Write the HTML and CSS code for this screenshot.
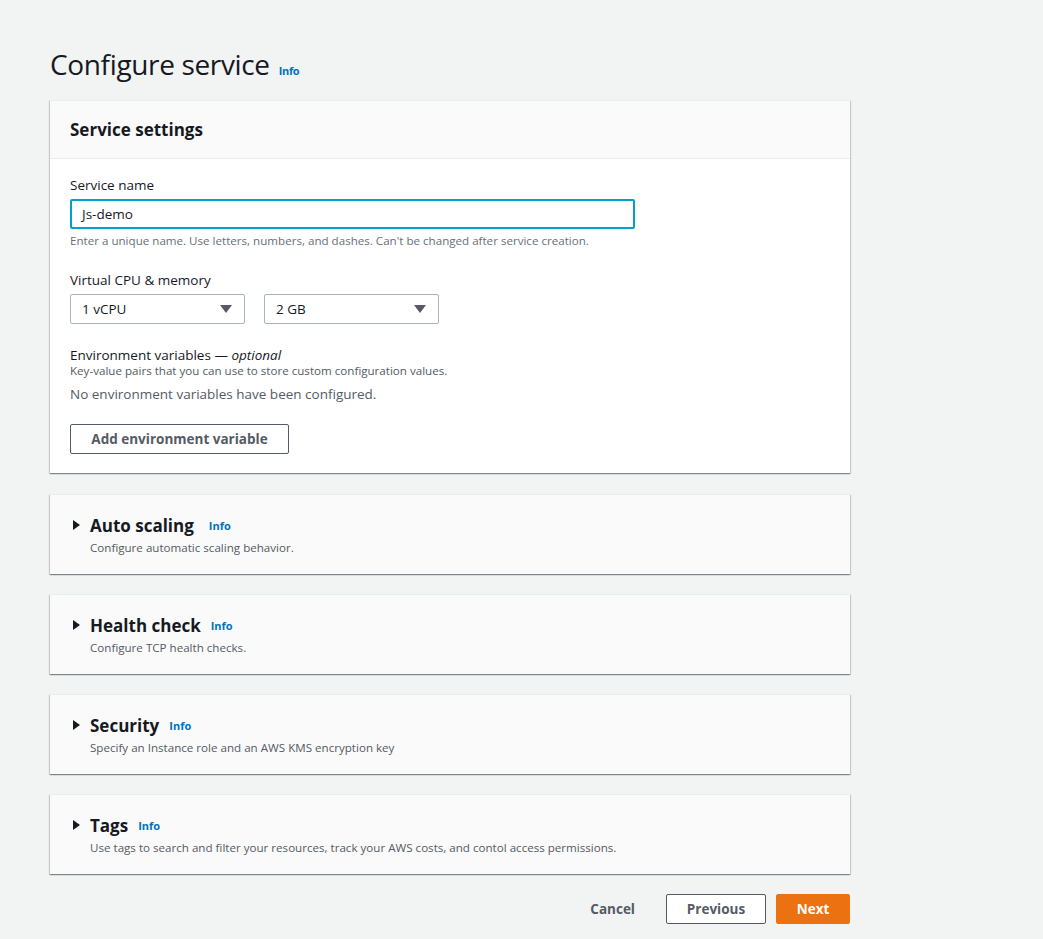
FILE: index.html
```html
<!DOCTYPE html>
<html lang="en">
<head>
<meta charset="utf-8">
<title>Configure service</title>
<link rel="stylesheet" href="styles.css">
</head>
<body>
<main class="page">
  <h1 class="page-title">Configure service <a class="info" href="#">Info</a></h1>

  <section class="card card-main">
    <header class="card-header"><h2>Service settings</h2></header>
    <div class="card-body">
      <div class="field">
        <label class="label">Service name</label>
        <div class="input">Js-demo</div>
        <p class="hint">Enter a unique name. Use letters, numbers, and dashes. Can't be changed after service creation.</p>
      </div>
      <div class="field">
        <label class="label">Virtual CPU &amp; memory</label>
        <div class="selects">
          <div class="select"><span>1 vCPU</span><span class="caret"></span></div>
          <div class="select"><span>2 GB</span><span class="caret"></span></div>
        </div>
      </div>
      <div class="field env">
        <label class="label">Environment variables — <i>optional</i></label>
        <p class="desc">Key-value pairs that you can use to store custom configuration values.</p>
        <p class="empty">No environment variables have been configured.</p>
        <button class="btn btn-normal">Add environment variable</button>
      </div>
    </div>
  </section>

  <section class="card collapsed">
    <div class="exp-head"><span class="tri"></span><h2>Auto scaling</h2><a class="info info-wide" href="#">Info</a></div>
    <p class="exp-desc">Configure automatic scaling behavior.</p>
  </section>

  <section class="card collapsed">
    <div class="exp-head"><span class="tri"></span><h2>Health check</h2><a class="info" href="#">Info</a></div>
    <p class="exp-desc">Configure TCP health checks.</p>
  </section>

  <section class="card collapsed">
    <div class="exp-head"><span class="tri"></span><h2>Security</h2><a class="info" href="#">Info</a></div>
    <p class="exp-desc">Specify an Instance role and an AWS KMS encryption key</p>
  </section>

  <section class="card collapsed">
    <div class="exp-head"><span class="tri"></span><h2>Tags</h2><a class="info" href="#">Info</a></div>
    <p class="exp-desc">Use tags to search and filter your resources, track your AWS costs, and contol access permissions.</p>
  </section>

  <div class="actions">
    <button class="btn btn-link">Cancel</button>
    <button class="btn btn-normal btn-prev">Previous</button>
    <button class="btn btn-primary">Next</button>
  </div>
</main>
</body>
</html>
```
FILE: styles.css
```css
* { box-sizing: border-box; }
html, body { margin: 0; padding: 0; }
body {
  background: #f2f3f3;
  font-family: "Open Sans", "Noto Sans", Arial, sans-serif;
  color: #16191f;
  font-size: 14px;
}
.page {
  width: 800px;
  margin-left: 50px;
  padding-top: 44px;
}
.page-title {
  margin: 0 0 9px;
  font-size: 28px;
  font-weight: 400;
  line-height: 40px;
  letter-spacing: -0.35px;
  display: flex;
  align-items: baseline;
  gap: 9px;
}
.info {
  color: #0073bb;
  font-size: 11px;
  font-weight: 700;
  text-decoration: none;
}
.card {
  background: #fff;
  box-shadow: 0 1px 1px 0 rgba(0,28,36,0.3), 1px 1px 1px 0 rgba(0,28,36,0.15), -1px 1px 1px 0 rgba(0,28,36,0.15);
  border-top: 1px solid #eaeded;
  margin-bottom: 20px;
}
.card-main { margin-bottom: 21px; }
.card-header {
  background: #fafafa;
  border-bottom: 1px solid #eaeded;
  height: 58px;
  padding: 0 20px;
  display: flex;
  align-items: center;
}
.card-header h2 {
  margin: 0;
  font-size: 17px;
  font-weight: 700;
}
.card-body {
  padding: 16px 20px 19px;
}
.field { margin-bottom: 21px; }
.label {
  display: block;
  font-size: 13.5px;
  line-height: 20px;
  margin-bottom: 4px;
}
.input {
  width: 565px;
  height: 30px;
  border: 2px solid #00a1c9;
  border-radius: 2px;
  padding: 0 10px;
  font-size: 13.5px;
  line-height: 26px;
}
.hint {
  margin: 4px 0 0;
  font-size: 11.6px;
  line-height: 16px;
  color: #687078;
}
.selects { display: flex; gap: 19px; }
.select {
  width: 175px;
  height: 30px;
  border: 1px solid #aab7b8;
  border-radius: 2px;
  padding: 0 12px 0 11px;
  display: flex;
  align-items: center;
  justify-content: space-between;
  font-size: 13.5px;
}
.caret {
  width: 0; height: 0;
  border-left: 6px solid transparent;
  border-right: 6px solid transparent;
  border-top: 8px solid #545b64;
}
.env { margin-bottom: 0; margin-top: 19px; }
.env .label { margin-bottom: 0; }
.env i { font-style: italic; }
.desc {
  margin: -2px 0 0;
  font-size: 11.6px;
  line-height: 16px;
  color: #545b64;
}
.empty {
  margin: 5px 0 0;
  font-size: 13.5px;
  line-height: 20px;
  color: #545b64;
}
.btn {
  font-family: inherit;
  font-weight: 700;
  font-size: 13.5px;
  cursor: pointer;
  border-radius: 2px;
  height: 30px;
  padding: 0 20px;
}
.btn-normal {
  background: #fff;
  border: 1px solid #545b64;
  color: #545b64;
}
.env .btn { margin-top: 20px; width: 219px; }
.collapsed {
  background: #fafafa;
  height: 80px;
  padding: 19px 20px 0 23px;
}
.exp-head {
  display: flex;
  align-items: center;
  height: 22px;
}
.tri {
  width: 0; height: 0;
  border-top: 5px solid transparent;
  border-bottom: 5px solid transparent;
  border-left: 7px solid #16191f;
  margin-right: 10px;
}
.exp-head h2 {
  margin: 0;
  font-size: 17px;
  font-weight: 700;
  margin-right: 10px;
}
.info-wide { margin-left: 5px; }
.exp-desc {
  margin: 4px 0 0 17px;
  font-size: 11.6px;
  line-height: 16px;
  color: #545b64;
}
.actions {
  display: flex;
  justify-content: flex-end;
  align-items: center;
  gap: 10px;
  margin-top: 0;
}
.btn-link {
  background: none;
  border: none;
  color: #545b64;
  padding: 0 20px;
  margin-right: 1px;
}
.btn-prev { width: 100px; padding: 0; }
.btn-primary {
  background: #ec7211;
  border: 1px solid #ec7211;
  color: #fff;
  width: 74px;
  padding: 0;
}
```
